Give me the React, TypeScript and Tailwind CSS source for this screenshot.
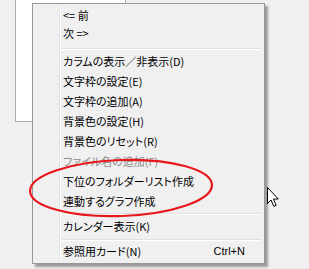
import React from 'react';

type Item =
  | { kind: 'item'; label: string; h?: number; disabled?: boolean; shortcut?: string }
  | { kind: 'sep'; h: number; at: number };

const items: Item[] = [
  { kind: 'item', label: '<= 前', h: 18 },
  { kind: 'item', label: '次 =>', h: 18 },
  { kind: 'sep', h: 9, at: 6 },
  { kind: 'item', label: 'カラムの表示／非表示(D)' },
  { kind: 'item', label: '文字枠の設定(E)' },
  { kind: 'item', label: '文字枠の追加(A)' },
  { kind: 'item', label: '背景色の設定(H)' },
  { kind: 'item', label: '背景色のリセット(R)' },
  { kind: 'item', label: 'ファイル名の追加(F)', disabled: true },
  { kind: 'item', label: '下位のフォルダーリスト作成' },
  { kind: 'item', label: '連動するグラフ作成' },
  { kind: 'sep', h: 5, at: 2 },
  { kind: 'item', label: 'カレンダー表示(K)' },
  { kind: 'sep', h: 5, at: 3 },
  { kind: 'item', label: '参照用カード(N)', shortcut: 'Ctrl+N' },
];

const App: React.FC = () => {
  return (
    <div className="relative w-[309px] h-[269px] overflow-hidden bg-[#f0f0f0] font-['Noto_Sans_CJK_JP','Noto_Sans',sans-serif] [font-feature-settings:'palt']">
      {/* window behind the menu */}
      <div className="absolute left-[15px] top-[-10px] w-[111px] h-[132px] border border-[#acacac] bg-white" />

      {/* context menu */}
      <div className="absolute left-[32px] top-[3px] w-[233px] border border-[#979797] bg-[#f0f0f0] p-[2px] shadow-[3px_3px_2px_rgba(0,0,0,0.35)]">
        {/* icon column divider */}
        <div className="absolute left-[26px] top-[2px] bottom-[2px] w-[2px] border-l border-[#e2e3e3] border-r border-r-white" />
        <div className="flex flex-col">
          {items.map((it, i) =>
            it.kind === 'sep' ? (
              <div key={i} className="relative" style={{ height: it.h }}>
                <div
                  className="absolute left-[26px] right-[1px] h-[2px] border-t border-[#e0e0e0] border-b border-b-white"
                  style={{ top: it.at }}
                />
              </div>
            ) : (
              <div
                key={i}
                className={`relative flex items-center justify-between pl-[28px] pr-[17px] text-[11px] whitespace-nowrap ${
                  it.disabled ? 'text-[#8d8d8d]' : 'text-black'
                }`}
                style={{ height: it.h ?? 20, lineHeight: `${it.h ?? 20}px` }}
              >
                <span>{it.label}</span>
                {it.shortcut && <span className="font-['Liberation_Sans',sans-serif]">{it.shortcut}</span>}
              </div>
            )
          )}
        </div>
      </div>

      {/* red annotation ellipse */}
      <svg className="absolute left-0 top-0" width="309" height="269" viewBox="0 0 309 269">
        <ellipse
          cx="121"
          cy="188"
          rx="91"
          ry="28"
          fill="none"
          stroke="#e8161c"
          strokeWidth="2.2"
          transform="rotate(-2 121 188)"
        />
      </svg>

      {/* mouse cursor */}
      <svg className="absolute left-[266px] top-[186px]" width="14" height="22" viewBox="0 0 14 22">
        <path
          d="M1.5 1.5 L1.5 17.5 L5 14 L7.8 20.3 L10.2 19.3 L7.4 13 L12.3 13 Z"
          fill="white"
          stroke="black"
          strokeWidth="1"
          strokeLinejoin="miter"
        />
      </svg>
    </div>
  );
};

export default App;
